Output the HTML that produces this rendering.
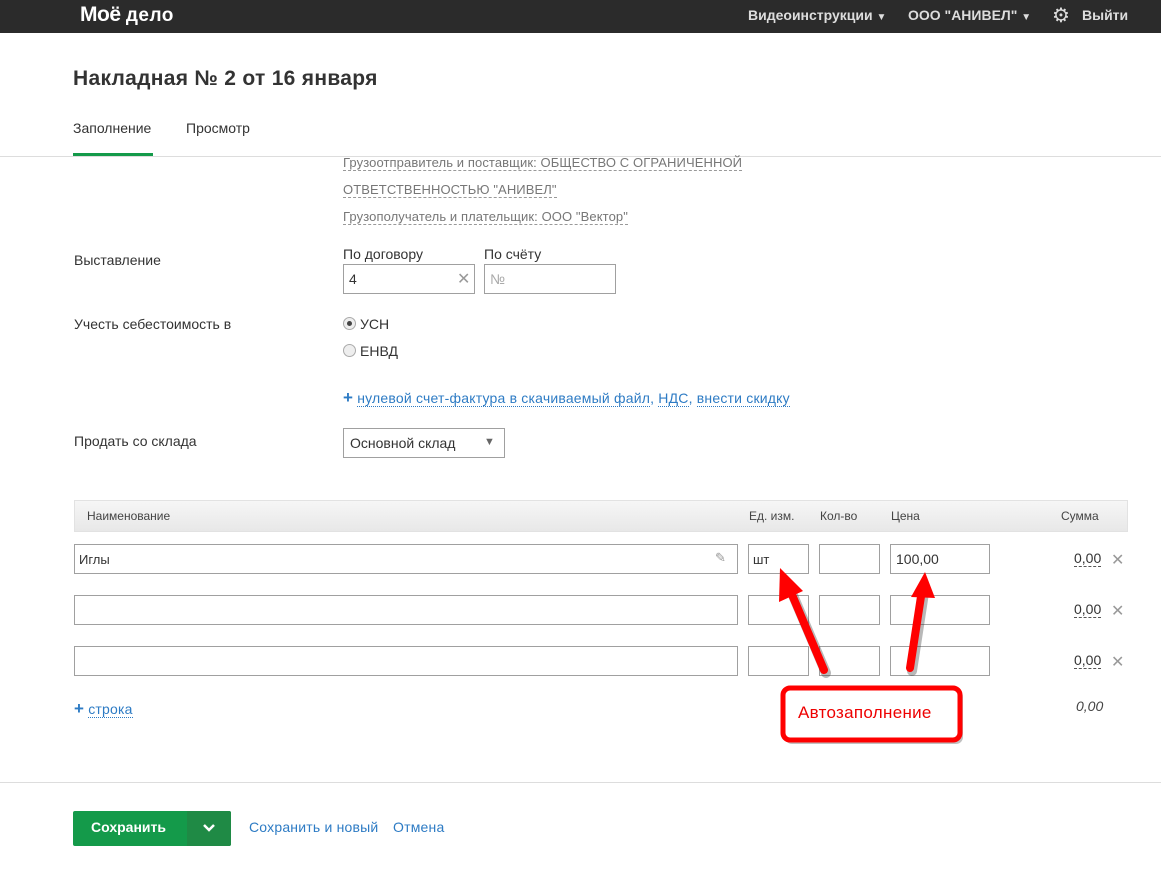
<!DOCTYPE html>
<html><head><meta charset="utf-8"><style>
*{margin:0;padding:0;box-sizing:border-box}
body{width:1161px;height:878px;position:relative;background:#fff;font-family:"Liberation Sans",Arial,sans-serif;color:#333;overflow:hidden}
.a{position:absolute;white-space:nowrap}
.hdr{left:0;top:0;width:1161px;height:33px;background:#2b2b2b}
.inp{position:absolute;border:1px solid #a0a0a0;background:#fff;height:30px}
.g{color:#777;font-size:13px;border-bottom:1px dashed #999;line-height:15px;letter-spacing:0.1px}
.lnk{color:#2d7bc4;font-size:14px;letter-spacing:0.2px}
.dot{border-bottom:1px dotted #2d7bc4}
.sum{font-size:14px;color:#333;border-bottom:1px dashed #555;line-height:15px}
.x{color:#999;font-size:16px}
</style></head><body>
<div class="a hdr"></div>
<div class="a" style="left:80px;top:3px;color:#fff;font-weight:bold;font-size:21px;letter-spacing:-0.5px">Моё <span style="font-size:19px;letter-spacing:0.5px">дело</span></div>
<div class="a" style="left:748px;top:7px;color:#ddd;font-weight:bold;font-size:14px">Видеоинструкции <span style="font-size:10px">▼</span></div>
<div class="a" style="left:908px;top:7px;color:#ddd;font-weight:bold;font-size:14px">ООО "АНИВЕЛ" <span style="font-size:10px">▼</span></div>
<div class="a" style="left:1052px;top:3px;color:#ddd;font-size:20px">⚙</div>
<div class="a" style="left:1082px;top:7px;color:#ddd;font-weight:bold;font-size:14px">Выйти</div>

<div class="a" style="left:73px;top:67px;font-size:21px;font-weight:bold;color:#333;letter-spacing:0.3px">Накладная № 2 от 16 января</div>
<div class="a" style="left:73px;top:120px;font-size:14px">Заполнение</div>
<div class="a" style="left:186px;top:120px;font-size:14px">Просмотр</div>
<div class="a" style="left:73px;top:153px;width:80px;height:3px;background:#149a4a"></div>
<div class="a" style="left:0;top:156px;width:1161px;height:1px;background:#ddd"></div>

<div class="a g" style="left:343px;top:155px">Грузоотправитель и поставщик: ОБЩЕСТВО С ОГРАНИЧЕННОЙ</div>
<div class="a g" style="left:343px;top:182px">ОТВЕТСТВЕННОСТЬЮ "АНИВЕЛ"</div>
<div class="a g" style="left:343px;top:209px">Грузополучатель и плательщик: ООО "Вектор"</div>

<div class="a" style="left:74px;top:252px;font-size:14px">Выставление</div>
<div class="a" style="left:343px;top:246px;font-size:14px">По договору</div>
<div class="a" style="left:484px;top:246px;font-size:14px">По счёту</div>
<div class="inp" style="left:343px;top:264px;width:132px"><span class="a" style="left:5px;top:6px;font-size:14px">4</span><span class="a x" style="left:113px;top:4px">✕</span></div>
<div class="inp" style="left:484px;top:264px;width:132px"><span class="a" style="left:5px;top:6px;font-size:14px;color:#aaa">№</span></div>

<div class="a" style="left:74px;top:316px;font-size:14px">Учесть себестоимость в</div>
<div class="a" style="left:343px;top:317px;width:13px;height:13px;border-radius:50%;border:1px solid #aaa;background:#eee"><div style="margin:3px;width:5px;height:5px;border-radius:50%;background:#444"></div></div>
<div class="a" style="left:360px;top:316px;font-size:14px">УСН</div>
<div class="a" style="left:343px;top:344px;width:13px;height:13px;border-radius:50%;border:1px solid #aaa;background:#eee"></div>
<div class="a" style="left:360px;top:343px;font-size:14px">ЕНВД</div>

<div class="a lnk" style="left:343px;top:388px"><b style="font-size:17px">+</b> <span class="dot">нулевой счет-фактура в скачиваемый файл</span>, <span class="dot">НДС</span>, <span class="dot">внести скидку</span></div>

<div class="a" style="left:74px;top:433px;font-size:14px">Продать со склада</div>
<div class="inp" style="left:343px;top:428px;width:162px;height:30px"><span class="a" style="left:6px;top:6px;font-size:14px">Основной склад</span><span class="a" style="left:140px;top:7px;font-size:11px;color:#666">▼</span></div>

<div class="a" style="left:74px;top:500px;width:1054px;height:32px;background:linear-gradient(#f6f6f6,#e8e8e8);border:1px solid #e2e2e2"></div>
<div class="a" style="left:87px;top:509px;font-size:12px;color:#444">Наименование</div>
<div class="a" style="left:749px;top:509px;font-size:12px;color:#444">Ед. изм.</div>
<div class="a" style="left:820px;top:509px;font-size:12px;color:#444">Кол-во</div>
<div class="a" style="left:891px;top:509px;font-size:12px;color:#444">Цена</div>
<div class="a" style="left:1061px;top:509px;font-size:12px;color:#444">Сумма</div>

<div class="inp" style="left:74px;top:544px;width:664px"><span class="a" style="left:4px;top:7px;font-size:13px">Иглы</span><span class="a" style="left:640px;top:5px;font-size:13px;color:#999">✎</span></div>
<div class="inp" style="left:748px;top:544px;width:61px"><span class="a" style="left:4px;top:7px;font-size:13px">шт</span></div>
<div class="inp" style="left:819px;top:544px;width:61px"></div>
<div class="inp" style="left:890px;top:544px;width:100px"><span class="a" style="left:5px;top:6px;font-size:14px">100,00</span></div>
<div class="a sum" style="left:1074px;top:551px">0,00</div><div class="a x" style="left:1111px;top:550px">✕</div>

<div class="inp" style="left:74px;top:595px;width:664px"></div>
<div class="inp" style="left:748px;top:595px;width:61px"></div>
<div class="inp" style="left:819px;top:595px;width:61px"></div>
<div class="inp" style="left:890px;top:595px;width:100px"></div>
<div class="a sum" style="left:1074px;top:602px">0,00</div><div class="a x" style="left:1111px;top:601px">✕</div>

<div class="inp" style="left:74px;top:646px;width:664px"></div>
<div class="inp" style="left:748px;top:646px;width:61px"></div>
<div class="inp" style="left:819px;top:646px;width:61px"></div>
<div class="inp" style="left:890px;top:646px;width:100px"></div>
<div class="a sum" style="left:1074px;top:653px">0,00</div><div class="a x" style="left:1111px;top:652px">✕</div>

<div class="a lnk" style="left:74px;top:699px"><b style="font-size:17px">+</b> <span class="dot">строка</span></div>
<div class="a" style="left:1076px;top:698px;font-size:14px;font-style:italic;color:#444">0,00</div>

<svg class="a" style="left:0;top:0" width="1161" height="878">
<g stroke="#333" stroke-opacity="0.35" stroke-width="10" stroke-linecap="round" fill="none" transform="translate(2,3)">
<line x1="824" y1="670" x2="790" y2="590"/><line x1="910" y1="668" x2="922" y2="590"/></g>
<g stroke="#f00" stroke-width="8" stroke-linecap="round" fill="none">
<line x1="824" y1="670" x2="790" y2="590"/><line x1="910" y1="668" x2="922" y2="590"/></g>
<polygon points="780,568 779,602 803,591" fill="#f00"/>
<polygon points="925,572 911,597 935,598" fill="#f00"/>
<rect x="785" y="690" width="178" height="54" rx="7" fill="#333" opacity="0.3"/>
<rect x="783" y="688" width="177" height="52" rx="7" fill="#fff" stroke="#f00" stroke-width="5"/>
</svg>
<div class="a" style="left:798px;top:703px;font-size:17px;color:#e00;letter-spacing:0.3px">Автозаполнение</div>

<div class="a" style="left:0;top:782px;width:1161px;height:1px;background:#ddd"></div>
<div class="a" style="left:73px;top:811px;width:158px;height:35px;background:#149a4a;border-radius:2px"></div>
<div class="a" style="left:187px;top:811px;width:44px;height:35px;background:#1f8a45;border-radius:0 2px 2px 0"></div>
<div class="a" style="left:91px;top:819px;font-size:14px;font-weight:bold;color:#fff">Сохранить</div>
<svg class="a" style="left:202px;top:823px" width="14" height="10"><polyline points="2,2 7,7 12,2" stroke="#fff" stroke-width="2.5" fill="none"/></svg>
<div class="a lnk" style="left:249px;top:819px">Сохранить и новый</div>
<div class="a lnk" style="left:393px;top:819px">Отмена</div>
</body></html>
